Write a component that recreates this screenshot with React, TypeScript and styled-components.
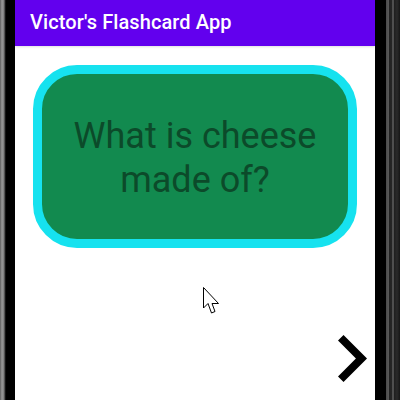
import React from 'react';
import styled, { createGlobalStyle } from 'styled-components';

const GlobalStyle = createGlobalStyle`
  html, body {
    margin: 0;
    padding: 0;
    background: #000;
  }
  body {
    font-family: Roboto, 'Noto Sans', sans-serif;
  }
`;

const Device = styled.div`
  position: relative;
  display: flex;
  width: 400px;
  height: 400px;
  overflow: hidden;
`;

const LeftBezel = styled.div`
  width: 15px;
  flex-shrink: 0;
  background: linear-gradient(
    to right,
    #5e5e5e 0px,
    #9a9a9a 2px,
    #7c7c7c 4px,
    #2b2b2b 5px,
    #000 6px,
    #000 15px
  );
`;

const RightBezel = styled.div`
  width: 25px;
  flex-shrink: 0;
  background: linear-gradient(
    to right,
    #000 0px,
    #000 11px,
    #4a4a4a 11px,
    #5a5a5a 14px,
    #222 14px,
    #262626 17px,
    #4f4f4f 17px,
    #4f4f4f 18.5px,
    #1c1c1c 18.5px,
    #2a2a2a 22px,
    #161616 25px
  );
`;

const Screen = styled.div`
  width: 360px;
  display: flex;
  flex-direction: column;
  background: #fff;
`;

const AppBar = styled.header`
  height: 46px;
  flex-shrink: 0;
  display: flex;
  align-items: center;
  padding: 0 15px;
  background: #6200ee;
  box-shadow: 0 1px 2px rgba(0, 0, 0, 0.12);
  position: relative;
  z-index: 1;
`;

const Title = styled.h1`
  margin: 0;
  margin-top: -2px;
  font-size: 20px;
  font-weight: 500;
  color: #fff;
  letter-spacing: 0.1px;
`;

const Content = styled.main`
  flex: 1;
  display: flex;
  flex-direction: column;
  padding: 19px 18px 0;
`;

const Card = styled.div`
  height: 183px;
  box-sizing: border-box;
  border: 9px solid #16e2ef;
  border-radius: 44px;
  background: #128a4f;
  display: flex;
  align-items: center;
  justify-content: center;
`;

const Question = styled.p`
  margin: 0;
  margin-top: 2px;
  text-align: center;
  font-size: 36px;
  line-height: 44px;
  color: #0c4a2a;
`;

const NavRow = styled.div`
  margin-top: auto;
  display: flex;
  justify-content: flex-end;
  padding: 0 8px 18px 0;
  margin-right: -18px;
`;

const NextButton = styled.button`
  border: none;
  background: none;
  padding: 0;
  display: flex;
  cursor: pointer;
`;

const Pointer = styled.svg`
  position: absolute;
  left: 203px;
  top: 287px;
  pointer-events: none;
`;

export default function App() {
  return (
    <>
      <GlobalStyle />
      <Device>
        <LeftBezel />
        <Screen>
          <AppBar>
            <Title>Victor's Flashcard App</Title>
          </AppBar>
          <Content>
            <Card>
              <Question>
                What is cheese
                <br />
                made of?
              </Question>
            </Card>
            <NavRow>
              <NextButton aria-label="Next card">
                <svg width="29" height="47" viewBox="8.59 6 7.41 12">
                  <path d="M10 6L8.59 7.41 13.17 12l-4.58 4.59L10 18l6-6z" fill="#000" />
                </svg>
              </NextButton>
            </NavRow>
          </Content>
        </Screen>
        <RightBezel />
        <Pointer width="18" height="28" viewBox="0 0 18 28">
          <path
            d="M0.5 0.5 L0.5 21 L5 16.5 L8.5 26 L12 24.5 L9 16.5 L15.5 16.5 Z"
            fill="#fff"
            stroke="#000"
            strokeWidth="1"
            strokeLinejoin="miter"
          />
        </Pointer>
      </Device>
    </>
  );
}
